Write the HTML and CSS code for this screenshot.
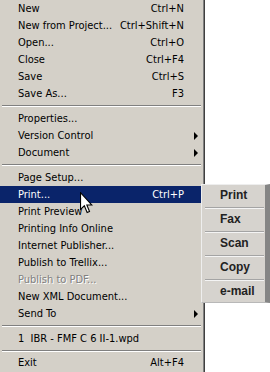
FILE: index.html
```html
<!DOCTYPE html>
<html lang="en">
<head>
  <meta charset="UTF-8" />
  <title>File menu</title>
  <link rel="stylesheet" href="styles.css">
</head>
<body>
  <div class="menu">
    <div class="item"><span>New</span><span class="key">Ctrl+N</span></div>
    <div class="item"><span>New from Project...</span><span class="key">Ctrl+Shift+N</span></div>
    <div class="item"><span>Open...</span><span class="key">Ctrl+O</span></div>
    <div class="item"><span>Close</span><span class="key">Ctrl+F4</span></div>
    <div class="item"><span>Save</span><span class="key">Ctrl+S</span></div>
    <div class="item"><span>Save As...</span><span class="key">F3</span></div>
    <div class="sep"></div>
    <div class="item"><span>Properties...</span></div>
    <div class="item"><span>Version Control</span><span class="key"></span><i class="arrow"></i></div>
    <div class="item"><span>Document</span><span class="key"></span><i class="arrow"></i></div>
    <div class="sep"></div>
    <div class="item"><span>Page Setup...</span></div>
    <div class="item active"><span>Print...</span><span class="key">Ctrl+P</span></div>
    <div class="item"><span>Print Preview</span></div>
    <div class="item"><span>Printing Info Online</span></div>
    <div class="item"><span>Internet Publisher...</span></div>
    <div class="item"><span>Publish to Trellix...</span></div>
    <div class="item disabled"><span>Publish to PDF...</span></div>
    <div class="item"><span>New XML Document...</span></div>
    <div class="item"><span>Send To</span><span class="key"></span><i class="arrow"></i></div>
    <div class="sep"></div>
    <div class="item"><span>1&nbsp; IBR - FMF C 6 II-1.wpd</span></div>
    <div class="sep"></div>
    <div class="item last"><span>Exit</span><span class="key">Alt+F4</span></div>
  </div>

  <div class="submenu">
    <div class="sub-item">Print</div>
    <div class="sub-sep"></div>
    <div class="sub-item">Fax</div>
    <div class="sub-sep"></div>
    <div class="sub-item">Scan</div>
    <div class="sub-sep"></div>
    <div class="sub-item">Copy</div>
    <div class="sub-sep"></div>
    <div class="sub-item">e-mail</div>
  </div>

  <svg class="cursor" width="13" height="22" viewBox="0 0 12 20">
    <path d="M0.5 0.5 L0.5 16 L4 12.6 L6.6 18.8 L8.8 17.9 L6.3 11.9 L11 11.9 Z" fill="#fff" stroke="#000" stroke-width="1" stroke-linejoin="miter"/>
  </svg>
</body>
</html>
```

FILE: styles.css
```css
:root {
  --face: #d4d0c8;
  --shadow: #808080;
  --dark: #404040;
  --hilite: #0a246a;
}

* {
  box-sizing: border-box;
}

body {
  margin: 0;
  background: #fff;
  font-family: "DejaVu Sans Condensed", "DejaVu Sans", sans-serif;
  font-size: 11px;
  color: #000;
  position: relative;
  width: 270px;
  height: 372px;
  overflow: hidden;
}

/* main file menu */
.menu {
  width: 204px;
  height: 372px;
  background: var(--face);
  padding-right: 2px;
  border-right: 1px solid var(--shadow);
  box-shadow: 1px 0 0 var(--dark);
}

.item {
  display: grid;
  grid-template-columns: 1fr auto 17px;
  align-items: center;
  height: 17px;
  padding-left: 18px;
  white-space: nowrap;
}
.item.last {
  height: 15px;
}
.item.active {
  background: var(--hilite);
  color: #fff;
}
.item.disabled {
  color: var(--shadow);
  text-shadow: 1px 1px 0 #fff;
}

.key {
  text-align: right;
}

.arrow {
  width: 0;
  height: 0;
  margin-left: 10px;
  border-top: 4px solid transparent;
  border-bottom: 4px solid transparent;
  border-left: 4px solid #000;
}

.sep {
  height: 2px;
  margin: 3px 0 3px 2px;
  border-top: 1px solid var(--shadow);
  border-bottom: 1px solid #fff;
}

/* print submenu */
.submenu {
  position: absolute;
  left: 201px;
  top: 184px;
  width: 69px;
  height: 119px;
  background: #d6d3ce;
  border-top: 1px solid #eeeeee;
  border-left: 1px solid #eeeeee;
  border-right: 5px solid #858585;
  border-bottom: 1px solid #b8b8b8;
  font-family: "Liberation Sans", Arial, sans-serif;
  font-size: 12px;
  font-weight: bold;
  color: #222;
}

.sub-item {
  height: 22px;
  line-height: 20px;
  padding-left: 18px;
}

.sub-sep {
  height: 2px;
  margin: 0 1px 0 3px;
  border-top: 1px solid #a4a4a4;
  border-bottom: 1px solid #f4f4f4;
}

.cursor {
  position: absolute;
  left: 80px;
  top: 192px;
}
```
